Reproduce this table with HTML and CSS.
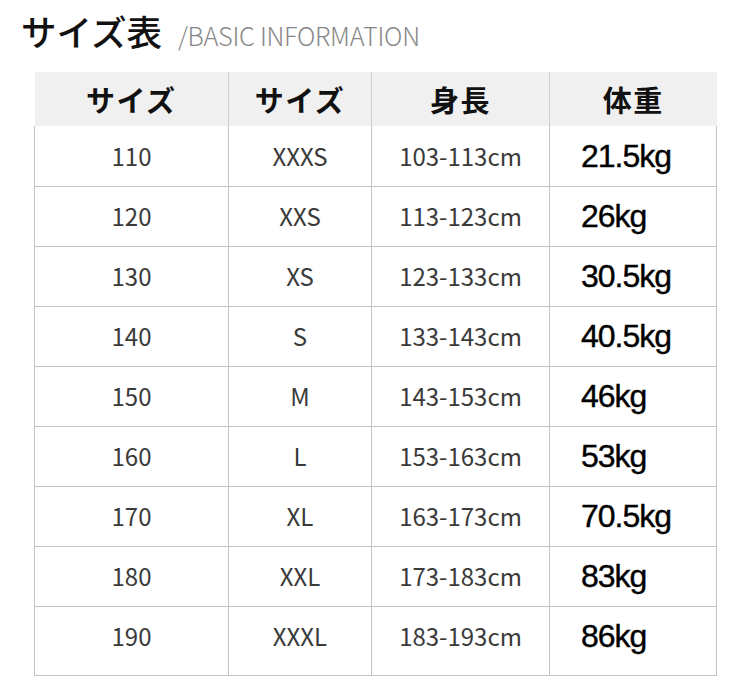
FILE: index.html
```html
<!DOCTYPE html>
<html lang="ja">
<head>
<meta charset="utf-8">
<link rel="stylesheet" href="styles.css">
</head>
<body>
<div class="page">
  <div class="title">
    <h1 class="title-main">サイズ表</h1>
    <span class="title-sub">/BASIC INFORMATION</span>
  </div>
  <table class="size-table">
    <colgroup>
      <col class="c1"><col class="c2"><col class="c3"><col class="c4">
    </colgroup>
    <thead>
      <tr><th>サイズ</th><th>サイズ</th><th>身長</th><th>体重</th></tr>
    </thead>
    <tbody>
      <tr><td>110</td><td>XXXS</td><td>103-113cm</td><td class="w">21.5kg</td></tr>
      <tr><td>120</td><td>XXS</td><td>113-123cm</td><td class="w">26kg</td></tr>
      <tr><td>130</td><td>XS</td><td>123-133cm</td><td class="w">30.5kg</td></tr>
      <tr><td>140</td><td>S</td><td>133-143cm</td><td class="w">40.5kg</td></tr>
      <tr><td>150</td><td>M</td><td>143-153cm</td><td class="w">46kg</td></tr>
      <tr><td>160</td><td>L</td><td>153-163cm</td><td class="w">53kg</td></tr>
      <tr><td>170</td><td>XL</td><td>163-173cm</td><td class="w">70.5kg</td></tr>
      <tr><td>180</td><td>XXL</td><td>173-183cm</td><td class="w">83kg</td></tr>
      <tr class="last"><td>190</td><td>XXXL</td><td>183-193cm</td><td class="w">86kg</td></tr>
    </tbody>
  </table>
</div>
</body>
</html>
```

FILE: styles.css
```css
html, body {
  margin: 0;
  padding: 0;
  background: #fff;
}
body {
  font-family: "Noto Sans CJK JP", "Noto Sans", sans-serif;
  color: #333;
}
.page {
  width: 750px;
  height: 687px;
  overflow: hidden;
}
.title {
  display: flex;
  align-items: baseline;
  gap: 16px;
  padding: 12px 0 0 21px;
  height: 61px;
  box-sizing: border-box;
}
.title-main {
  margin: 0;
  font-size: 35.5px;
  line-height: 38px;
  font-weight: 500;
  color: #111;
}
.title-sub {
  font-size: 25.3px;
  font-weight: 300;
  color: #888;
  letter-spacing: -0.3px;
}
.size-table {
  margin: 11px 0 0 34px;
  border-collapse: collapse;
  table-layout: fixed;
  width: 682px;
}
.c1 { width: 194px; }
.c2 { width: 143px; }
.c3 { width: 178px; }
.c4 { width: 167px; }
.size-table th {
  background: #f0f0f0;
  height: 54px;
  padding: 0;
  font-size: 29px;
  font-weight: 700;
  color: #111;
  letter-spacing: 1.5px;
  border-left: 1px solid #cfcfcf;
  box-sizing: border-box;
}
.size-table th:first-child { border-left: none; }
.size-table td {
  height: 60px;
  padding: 0;
  text-align: center;
  font-size: 24px;
  font-weight: 400;
  color: #3a3a3a;
  border: 1px solid #c4c4c4;
  box-sizing: border-box;
  line-height: 1;
}
.size-table tbody tr:first-child td { border-top: none; }
.size-table td.w {
  text-align: left;
  padding-left: 31px;
  font-family: "Liberation Sans", Arial, sans-serif;
  font-size: 32px;
  letter-spacing: -1px;
  color: #000;
  -webkit-text-stroke: 0.4px #000;
}
.size-table tr.last td {
  height: 69px;
  padding-bottom: 9px;
}
.size-table tr.last td.w {
  padding-bottom: 9px;
}
```
